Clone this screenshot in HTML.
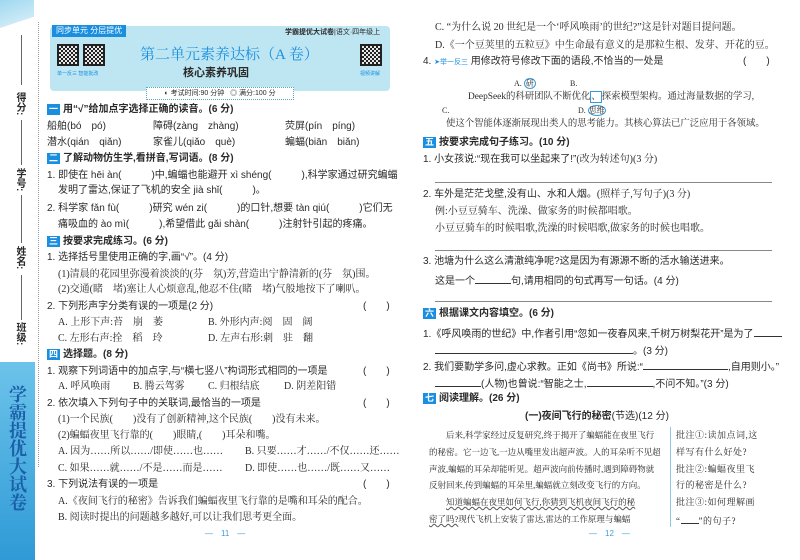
<!DOCTYPE html>
<html><head><meta charset="utf-8"><style>
body{margin:0;width:800px;height:560px;overflow:hidden;background:#fff;position:relative;font-family:"Liberation Sans","Noto Sans CJK SC",sans-serif;color:#2a2a2a}
.t{position:absolute;font-size:10px;white-space:nowrap;line-height:12px}
.s{font-family:"Liberation Serif","Noto Serif CJK SC",serif}
.h{font-weight:bold;font-size:10px}
.n{display:inline-block;background:#1a8fe0;color:#fff;font-size:9px;padding:0 2px;margin-right:3px;line-height:11px}
.ln{position:absolute;height:1px;background:#888}
.qr{position:absolute;width:22px;height:22px;background:repeating-conic-gradient(#222 0 25%,#e8e8e8 0 50%) 0 0/4px 4px;border:2px solid #222;box-sizing:border-box}
.u{display:inline-block;border-bottom:1px solid #333;height:10px}
.p{font-size:8.5px}
.a{font-size:9px;letter-spacing:.5px}
</style></head><body>
<!-- left sidebar -->
<div style="position:absolute;left:0;top:0;width:34px;height:28px;background:linear-gradient(160deg,#9fd8f0,#dff2fa);clip-path:polygon(0 0,100% 0,100% 60%,0 100%)"></div>
<div style="position:absolute;left:38px;top:22px;height:445px;border-left:1px dotted #999"></div>
<div class="t" style="left:13px;top:92px;font-size:10px;font-weight:bold;writing-mode:vertical-rl">得分:</div>
<div class="t" style="left:13px;top:168px;font-size:10px;font-weight:bold;writing-mode:vertical-rl">学号:</div>
<div class="t" style="left:13px;top:246px;font-size:10px;font-weight:bold;writing-mode:vertical-rl">姓名:</div>
<div class="t" style="left:13px;top:322px;font-size:10px;font-weight:bold;writing-mode:vertical-rl">班级:</div>
<div style="position:absolute;left:21px;top:35px;width:1px;height:50px;background:#666"></div>
<div style="position:absolute;left:21px;top:120px;width:1px;height:45px;background:#666"></div>
<div style="position:absolute;left:21px;top:195px;width:1px;height:48px;background:#666"></div>
<div style="position:absolute;left:21px;top:275px;width:1px;height:45px;background:#666"></div>
<div style="position:absolute;left:0;top:362px;width:35px;height:198px;background:linear-gradient(180deg,#6cc3ea,#2f9ad6)"></div>
<div class="t" style="left:8px;top:385px;font-size:18px;line-height:20px;color:#1a5fa8;writing-mode:vertical-rl;font-weight:bold;font-family:'Noto Serif CJK SC',serif">学霸提优大试卷</div>
<!-- header -->
<div style="position:absolute;left:50px;top:26px;width:340px;height:65px;background:#bde6f2;border-radius:4px"></div>
<div class="t" style="left:52px;top:25px;background:#1a8fe0;color:#fff;font-size:8px;padding:1px 4px;line-height:10px">同步单元 分层提优</div>
<div class="t" style="left:285px;top:27px;font-size:7px;font-weight:bold">学霸提优大试卷<span style="font-weight:normal">|语文·四年级上</span></div>
<div class="qr" style="left:57px;top:44px"></div><div class="qr" style="left:83px;top:44px"></div><div class="qr" style="left:360px;top:44px"></div>
<div class="t" style="left:57px;top:68px;font-size:5px;color:#1a8fe0">单一反三 智能批改</div>
<div class="t" style="left:360px;top:68px;font-size:5px;color:#1a8fe0">视频讲解</div>
<div class="t s" style="left:140px;top:46px;font-size:15px;line-height:18px;color:#1a8fe0">第二单元素养达标（A 卷）</div>
<div class="t" style="left:183px;top:67px;font-size:11px;font-weight:bold">核心素养巩固</div>
<div class="t" style="left:146px;top:87px;width:146px;height:11px;border:1px dotted #5ab;background:#fff;font-size:7px;line-height:11px;text-align:center">◐ 考试时间:90 分钟 &nbsp;&nbsp;◎ 满分:100 分</div>
<!-- left content -->
<div class="t h" style="left:47px;top:104px"><span class="n">一</span>用“√”给加点字选择正确的读音。(6 分)</div>
<div class="t" style="left:47px;top:121px">船舶(bó　pó)</div><div class="t" style="left:153px;top:121px">障碍(zàng　zhàng)</div><div class="t" style="left:285px;top:121px">荧屏(pín　píng)</div>
<div class="t" style="left:47px;top:137px">潜水(qián　qiǎn)</div><div class="t" style="left:153px;top:137px">家雀儿(qiǎo　què)</div><div class="t" style="left:285px;top:137px">蝙蝠(biān　biǎn)</div>
<div class="t h" style="left:47px;top:153px"><span class="n">二</span>了解动物仿生学,看拼音,写词语。(8 分)</div>
<div class="t" style="left:47px;top:170px">1. 即使在 hēi àn(　　　)中,蝙蝠也能避开 xì shéng(　　　),科学家通过研究蝙蝠</div>
<div class="t" style="left:58px;top:185px">发明了雷达,保证了飞机的安全 jià shǐ(　　　)。</div>
<div class="t" style="left:47px;top:203px">2. 科学家 fǎn fù(　　　)研究 wén zi(　　　)的口针,想要 tàn qiú(　　　)它们无</div>
<div class="t" style="left:58px;top:219px">痛吸血的 ào mì(　　　),希望借此 gǎi shàn(　　　)注射针引起的疼痛。</div>
<div class="t h" style="left:47px;top:236px"><span class="n">三</span>按要求完成练习。(6 分)</div>
<div class="t" style="left:47px;top:252px">1. 选择括号里使用正确的字,画“√”。(4 分)</div>
<div class="t s" style="left:58px;top:269px">(1)清晨的花园里弥漫着淡淡的(芬　氛)芳,营造出宁静清新的(芬　氛)围。</div>
<div class="t s" style="left:58px;top:284px">(2)交通(睹　堵)塞让人心烦意乱,他忍不住(睹　堵)气般地按下了喇叭。</div>
<div class="t" style="left:47px;top:301px">2. 下列形声字分类有误的一项是(2 分)</div><div class="t" style="left:363px;top:301px">(　　)</div>
<div class="t s" style="left:58px;top:317px">A. 上形下声:苔　崩　萎</div><div class="t s" style="left:208px;top:317px">B. 外形内声:阅　固　阔</div>
<div class="t s" style="left:58px;top:333px">C. 左形右声:拴　稻　玲</div><div class="t s" style="left:208px;top:333px">D. 左声右形:刺　驻　翻</div>
<div class="t h" style="left:47px;top:349px"><span class="n">四</span>选择题。(8 分)</div>
<div class="t" style="left:47px;top:366px">1. 观察下列词语中的加点字,与“横七竖八”构词形式相同的一项是</div><div class="t" style="left:363px;top:366px">(　　)</div>
<div class="t s" style="left:58px;top:381px">A. 呼风唤雨</div><div class="t s" style="left:133px;top:381px">B. 腾云驾雾</div><div class="t s" style="left:208px;top:381px">C. 归根结底</div><div class="t s" style="left:284px;top:381px">D. 阴差阳错</div>
<div class="t" style="left:47px;top:398px">2. 依次填入下列句子中的关联词,最恰当的一项是</div><div class="t" style="left:363px;top:398px">(　　)</div>
<div class="t s" style="left:58px;top:414px">(1)一个民族(　　)没有了创新精神,这个民族(　　)没有未来。</div>
<div class="t s" style="left:58px;top:430px">(2)蝙蝠夜里飞行靠的(　　)眼睛,(　　)耳朵和嘴。</div>
<div class="t s" style="left:58px;top:446px">A. 因为……所以……/即使……也……</div><div class="t s" style="left:245px;top:446px">B. 只要……才……/不仅……还……</div>
<div class="t s" style="left:58px;top:463px">C. 如果……就……/不是……而是……</div><div class="t s" style="left:245px;top:463px">D. 即使……也……/既……又……</div>
<div class="t" style="left:47px;top:479px">3. 下列说法有误的一项是</div><div class="t" style="left:363px;top:479px">(　　)</div>
<div class="t s" style="left:58px;top:496px">A.《夜间飞行的秘密》告诉我们蝙蝠夜里飞行靠的是嘴和耳朵的配合。</div>
<div class="t s" style="left:58px;top:512px">B. 阅读时提出的问题越多越好,可以让我们思考更全面。</div>
<div class="t" style="left:205px;top:528px;color:#3aa0dc;font-size:8px">—　11　—</div>
<!-- right page -->
<div class="t s" style="left:435px;top:22px">C. “为什么说 20 世纪是一个‘呼风唤雨’的世纪?”这是针对题目提问题。</div>
<div class="t s" style="left:435px;top:40px">D.《一个豆荚里的五粒豆》中生命最有意义的是那粒生根、发芽、开花的豆。</div>
<div class="t" style="left:423px;top:56px">4. <span style="color:#1a8fe0;font-size:7px">➤举一反三</span> 用修改符号修改下面的语段,不恰当的一处是</div><div class="t" style="left:743px;top:56px">(　　)</div>
<div class="t s" style="left:514px;top:78px;font-size:8px">A. <span style="border:1px solid #3a9ad8;border-radius:50%;padding:0 1px">研</span></div><div class="t s" style="left:570px;top:78px;font-size:8px">B.</div>
<div class="t s" style="left:468px;top:91px;font-size:9.4px">DeepSeek的科研团队不断优化<span style="border:1px solid #3a9ad8">、</span>探索模型架构。通过海量数据的学习,</div>
<div class="t s" style="left:442px;top:105px;font-size:8px">C.</div><div class="t s" style="left:578px;top:105px;font-size:8px">D. <span style="border:1px solid #3a9ad8;border-radius:50%">思维</span></div>
<div class="t s" style="left:446px;top:118px;font-size:9.4px">使这个智能体逐渐展现出类人的思考能力。其核心算法已广泛应用于各领域。</div>
<div class="t h" style="left:423px;top:137px"><span class="n">五</span>按要求完成句子练习。(10 分)</div>
<div class="t" style="left:423px;top:154px">1. 小女孩说:“现在我可以坐起来了!”<span class="s">(改为转述句)(3 分)</span></div>
<div class="ln" style="left:435px;top:182px;width:337px"></div>
<div class="t" style="left:423px;top:189px">2. 车外是茫茫戈壁,没有山、水和人烟。<span class="s">(照样子,写句子)(3 分)</span></div>
<div class="t s" style="left:435px;top:206px">例:小豆豆骑车、洗澡、做家务的时候都唱歌。</div>
<div class="t s" style="left:435px;top:223px">小豆豆骑车的时候唱歌,洗澡的时候唱歌,做家务的时候也唱歌。</div>
<div class="ln" style="left:435px;top:250px;width:337px"></div>
<div class="t" style="left:423px;top:256px">3. 池塘为什么这么清澈纯净呢?这是因为有源源不断的活水输送进来。</div>
<div class="t" style="left:435px;top:273px">这是一个<span class="u" style="width:36px"></span>句,请用相同的句式再写一句话。(4 分)</div>
<div class="ln" style="left:435px;top:301px;width:337px"></div>
<div class="t h" style="left:423px;top:308px"><span class="n">六</span>根据课文内容填空。(6 分)</div>
<div class="t" style="left:423px;top:326px">1.《呼风唤雨的世纪》中,作者引用“忽如一夜春风来,千树万树梨花开”是为了<span class="u" style="width:28px"></span></div>
<div class="t" style="left:435px;top:343px"><span class="u" style="width:198px"></span>。(3 分)</div>
<div class="t" style="left:423px;top:359px">2. 我们要勤学多问,虚心求教。正如《尚书》所说:“<span class="u" style="width:85px"></span>,自用则小。”</div>
<div class="t" style="left:435px;top:376px"><span class="u" style="width:46px"></span>(人物)也曾说:“智能之士,<span class="u" style="width:66px"></span>,不问不知。”(3 分)</div>
<div class="t h" style="left:423px;top:393px"><span class="n">七</span>阅读理解。(26 分)</div>
<div class="t h" style="left:525px;top:411px">(一)夜间飞行的秘密<span style="font-weight:normal">(节选)(12 分)</span></div>
<div style="position:absolute;left:670px;top:427px;width:1px;height:100px;background:#8cc8e8"></div>
<div class="t s p" style="left:429px;top:429px">　　后来,科学家经过反复研究,终于揭开了蝙蝠能在夜里飞行</div>
<div class="t s p" style="left:429px;top:446px">的秘密。它一边飞,一边从嘴里发出超声波。人的耳朵听不见超</div>
<div class="t s p" style="left:429px;top:463px">声波,蝙蝠的耳朵却能听见。超声波向前传播时,遇到障碍物就</div>
<div class="t s p" style="left:429px;top:479px">反射回来,传到蝙蝠的耳朵里,蝙蝠就立刻改变飞行的方向。</div>
<div class="t s p" style="left:429px;top:496px">　　<span style="text-decoration:underline wavy #555">知道蝙蝠在夜里如何飞行,你猜到飞机夜间飞行的秘</span></div>
<div class="t s p" style="left:429px;top:513px"><span style="text-decoration:underline wavy #555">密了吗?</span>现代飞机上安装了雷达,雷达的工作原理与蝙蝠</div>
<div class="t s a" style="left:676px;top:429px">批注①:读加点词,这</div>
<div class="t s a" style="left:676px;top:446px">样写有什么好处?</div>
<div class="t s a" style="left:676px;top:463px">批注②:蝙蝠夜里飞</div>
<div class="t s a" style="left:676px;top:479px">行的秘密是什么?</div>
<div class="t s a" style="left:676px;top:496px">批注③:如何理解画</div>
<div class="t s a" style="left:676px;top:513px">“<span class="u" style="width:18px"></span>”的句子?</div>
<div class="t" style="left:589px;top:528px;color:#3aa0dc;font-size:8px">—　12　—</div>
</body></html>
